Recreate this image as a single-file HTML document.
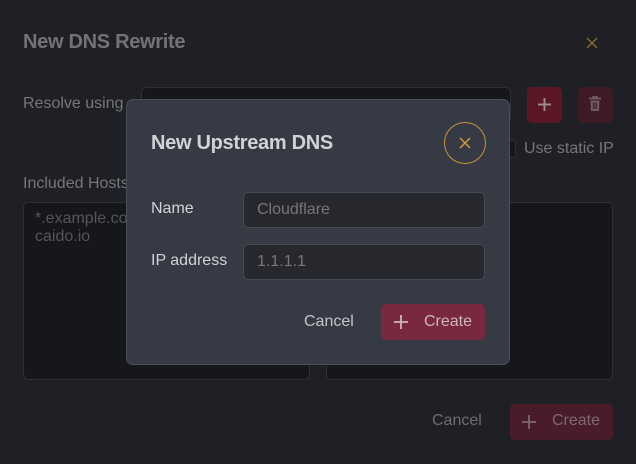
<!DOCTYPE html>
<html><head><meta charset="utf-8"><style>
*{box-sizing:border-box;margin:0;padding:0}
body{width:636px;height:464px;background:#1f2025;font-family:"Liberation Sans",sans-serif;position:relative;overflow:hidden}
.a{position:absolute}
.t{white-space:nowrap}
</style></head><body>
<div class="a t" style="left:23px;top:31px;font-size:20px;font-weight:bold;color:#727377;letter-spacing:-0.3px">New DNS Rewrite</div>
<svg class="a" style="left:585px;top:36px" width="14" height="14"><path d="M2 2L12 12M12 2L2 12" stroke="#8a6a30" stroke-width="1.5"/></svg>
<div class="a t" style="left:23px;top:95px;font-size:16px;color:#75767a">Resolve using</div>
<div class="a" style="left:141px;top:87px;width:370px;height:36px;background:#16171a;border:1px solid #2e3036;border-radius:5px"></div>
<div class="a" style="left:527px;top:87px;width:35px;height:36px;background:#5c1726;border-radius:5px"></div>
<svg class="a" style="left:537px;top:97px" width="15" height="15"><path d="M7.5 1V14M1 7.5H14" stroke="#9a8a8d" stroke-width="2"/></svg>
<div class="a" style="left:578px;top:87px;width:35px;height:36px;background:#3e1a24;border-radius:5px"></div>
<svg class="a" style="left:587px;top:95px" width="16" height="18"><path d="M2 3.5H14M6 3.5V2H10V3.5" stroke="#6e5c60" stroke-width="1.8" fill="none"/><path d="M3.5 5.5H12.5L12 16H4Z" fill="#6e5c60"/><path d="M6.3 7.5V14M8 7.5V14M9.7 7.5V14" stroke="#3e1a24" stroke-width="0.9"/></svg>
<div class="a" style="left:507px;top:140px;width:9px;height:18px;background:#16171a;border:1px solid #2e3036;border-radius:3px"></div>
<div class="a t" style="left:524px;top:140px;font-size:16px;color:#75767a">Use static IP</div>
<div class="a t" style="left:23px;top:175px;font-size:16px;color:#75767a">Included Hosts</div>
<div class="a" style="left:23px;top:202px;width:287px;height:178px;background:#16171a;border:1px solid #2e3036;border-radius:5px"></div>
<div class="a" style="left:326px;top:202px;width:287px;height:178px;background:#16171a;border:1px solid #2e3036;border-radius:5px"></div>
<div class="a t" style="left:35px;top:210px;font-size:16px;line-height:18px;color:#55565a">*.example.com<br>caido.io</div>
<div class="a t" style="left:432px;top:412px;font-size:16px;color:#6c6d71">Cancel</div>
<div class="a" style="left:510px;top:404px;width:103px;height:36px;background:#4a1c29;border-radius:5px"></div>
<svg class="a" style="left:521px;top:414px" width="16" height="16"><path d="M8 1V15M1 8H15" stroke="#7a6a6e" stroke-width="1.8"/></svg>
<div class="a t" style="left:552px;top:412px;font-size:16px;color:#7a6a6e">Create</div>

<div class="a" style="left:126px;top:99px;width:384px;height:266px;background:#353a44;border:1px solid #4a4f5a;border-radius:7px"></div>
<div class="a t" style="left:151px;top:132px;font-size:20px;font-weight:bold;color:#d2d3d6;letter-spacing:-0.3px">New Upstream DNS</div>
<div class="a" style="left:444px;top:122px;width:42px;height:42px;border:1.5px solid #c89335;border-radius:50%"></div>
<svg class="a" style="left:459px;top:137px" width="12" height="12"><path d="M1 1L11 11M11 1L1 11" stroke="#d39a37" stroke-width="1.5"/></svg>
<div class="a t" style="left:151px;top:200px;font-size:16px;color:#d2d3d6">Name</div>
<div class="a" style="left:243px;top:192px;width:242px;height:36px;background:#26282e;border:1px solid #474b54;border-radius:5px"></div>
<div class="a t" style="left:257px;top:201px;font-size:16px;color:#75777c">Cloudflare</div>
<div class="a t" style="left:151px;top:252px;font-size:16px;color:#d2d3d6">IP address</div>
<div class="a" style="left:243px;top:244px;width:242px;height:36px;background:#26282e;border:1px solid #474b54;border-radius:5px"></div>
<div class="a t" style="left:257px;top:253px;font-size:16px;color:#75777c">1.1.1.1</div>
<div class="a t" style="left:304px;top:313px;font-size:16px;color:#c4c5c8">Cancel</div>
<div class="a" style="left:381px;top:304px;width:104px;height:36px;background:#7a2840;border-radius:5px"></div>
<svg class="a" style="left:393px;top:314px" width="16" height="16"><path d="M8 1V15M1 8H15" stroke="#c9b7bc" stroke-width="1.8"/></svg>
<div class="a t" style="left:424px;top:313px;font-size:16px;color:#c9b7bc">Create</div>
</body></html>
